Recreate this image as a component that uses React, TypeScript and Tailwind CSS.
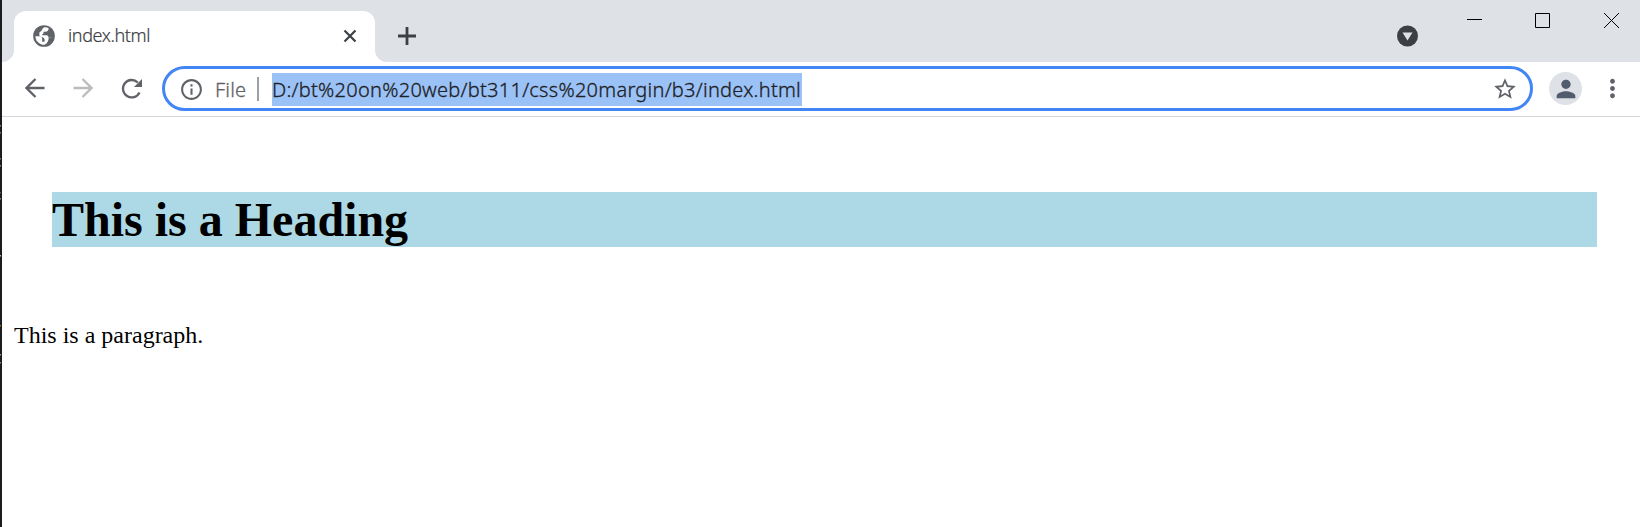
import React from 'react';

const fringe = [
  [6, '#8a8a8a'], [13, '#777'], [39, '#777'], [46, '#888'], [73, '#555'], [79, '#888'],
  [136, '#bbb'], [206, '#b06a20'], [235, '#999'], [243, '#888'],
] as const;

function Icon({ d, className }: { d: string; className: string }) {
  return (
    <svg viewBox="0 0 24 24" fill="currentColor" className={'shrink-0 ' + className}>
      <path d={d} />
    </svg>
  );
}

function Globe() {
  return (
    <svg viewBox="0 0 24 24" className="size-[26px] shrink-0">
      <circle cx="12" cy="12" r="10" fill="#5f6368" />
      <path
        fill="#fff"
        d="M12.600 4C14 3.900 15.300 4.200 16.300 4.800C16.200 6.800 15.200 7.900 13.300 8.100H11.500V9.300C11.500 10 11 10.400 10.200 10.500V11.300H14.200C15.600 11.400 16.200 12.200 16.200 13.500H19.600C19 17.200 15.800 20 12 20C11 20 10.200 19.800 9.400 19.500V17.400H11.300C12.200 17.400 12.700 17 12.700 16.200C12.600 14.300 11.400 13.100 9.400 13L7.700 11.600V9.600C7.700 8.500 8.300 7.900 9.500 7.600C10.100 5.900 11 4.600 12.600 4Z"
      />
      <path fill="#5f6368" d="M16.400 13.600H20.500L19.500 18L15 21L12.500 20.300C14.800 18.800 16.200 16.600 16.400 13.600Z" />
      <path fill="#fff" d="M4 12.300H8.500C9.800 12.600 10.300 13.600 10.300 15V17.500L10 19.700A8 8 0 0 1 7.600 18.700C5.400 17.300 4.100 15 4 12.300Z" />
    </svg>
  );
}

function TabStrip() {
  return (
    <div className="flex h-[62px] bg-[#dee1e6]">
      <div className="relative mt-[11px] ml-3 flex h-[51px] w-[361px] items-center rounded-t-xl bg-white pr-[18px] pl-[17px]">
        <svg viewBox="0 0 12 12" className="absolute bottom-0 -left-3 size-3 fill-white">
          <path d="M12 0V12H0A12 12 0 0 0 12 0Z" />
        </svg>
        <svg viewBox="0 0 12 12" className="absolute -right-3 bottom-0 size-3 fill-white">
          <path d="M0 0V12H12A12 12 0 0 1 0 0Z" />
        </svg>
        <div className="-mt-[2px]">
          <Globe />
        </div>
        <span className="-mt-[3px] ml-[11px] flex-1 font-['Noto_Sans',sans-serif] text-[18px] leading-6 font-light tracking-[-0.38px] text-[#3c4043] [-webkit-text-stroke:0.2px]">index.html</span>
        <svg viewBox="0 0 14 14" className="-mt-[2px] size-[14px] stroke-[#3c4043] stroke-[2.2]">
          <path d="M1.500 1.500L12.500 12.500M12.500 1.500L1.500 12.500" />
        </svg>
      </div>
      <svg viewBox="0 0 18 18" className="mt-[27px] ml-[23px] size-[18px] stroke-[#3c4043] stroke-[2.800]">
        <path d="M9 0V18M0 9H18" />
      </svg>
      <div className="flex-1" />
      <svg viewBox="0 0 22 22" className="mt-[25px] size-[22px]">
        <circle cx="10.500" cy="11" r="10.500" fill="#3c4043" />
        <path d="M5.500 7.500H15.500L10.500 15.500Z" fill="#dee1e6" />
      </svg>
      <svg viewBox="0 0 15 15" className="mt-[13px] ml-[48px] size-[15px] stroke-black" fill="none">
        <path d="M0 6.500H15" />
      </svg>
      <svg viewBox="0 0 15 15" className="mt-[13px] ml-[53px] size-[15px] stroke-black" fill="none">
        <path d="M.5.5H14.500V14.500H.5Z" />
      </svg>
      <svg viewBox="0 0 15 15" className="mt-[13px] mr-[21px] ml-[54px] size-[15px] stroke-black" fill="none">
        <path d="M0 0L15 15M15 0L0 15" />
      </svg>
    </div>
  );
}

function Toolbar() {
  return (
    <div className="flex h-[55px] items-start border-b border-[#d5d7da] bg-white text-[#5f6368]">
      <svg viewBox="0 0 20 20" className="mt-[16px] ml-[23px] size-5 shrink-0 fill-none stroke-[#5f6368] stroke-[2.300]">
        <path d="M19.500 10H2M10.500 1L1.500 10L10.500 19" />
      </svg>
      <svg viewBox="0 0 20 20" className="mt-[16px] ml-7 size-5 shrink-0 fill-none stroke-[#babcbe] stroke-[2.300]">
        <path d="M.5 10H18M9.500 1L18.500 10L9.500 19" />
      </svg>
      <svg viewBox="0 0 22 22" className="mt-[16px] ml-[28px] size-[22px] shrink-0">
        <path d="M18.500 14.500A8.700 8.700 0 1 1 16.800 4.500" fill="none" stroke="#5f6368" strokeWidth="2.300" />
        <path d="M21 1V9H13Z" fill="#5f6368" />
      </svg>
      <div className="mt-1 ml-[19px] flex h-[45px] w-[1371px] items-center rounded-full border-3 border-[#4285f4] pr-[12px] pl-[14px] font-['Noto_Sans',sans-serif] text-[20px]">
        <Icon
          className="mt-px size-[25px]"
          d="M11 7h2v2h-2zm0 4h2v6h-2zm1-9C6.480 2 2 6.480 2 12s4.480 10 10 10 10-4.480 10-10S17.520 2 12 2zm0 18c-4.410 0-8-3.590-8-8s3.590-8 8-8 8 3.590 8 8-3.590 8-8 8z"
        />
        <span className="mt-px ml-[11px] w-[42px] leading-[33px] font-light tracking-[0.2px] [-webkit-text-stroke:0.3px]">File</span>
        <span className="h-6 w-[2px] bg-[#9aa0a6]" />
        <span className="mt-px ml-[13px] h-[33px] w-[530px] bg-[#9bc2f7] leading-[33px] font-light tracking-[0.26px] whitespace-nowrap text-[#202124] [-webkit-text-stroke:0.3px]">
          D:/bt%20on%20web/bt311/css%20margin/b3/index.html
        </span>
        <Icon
          className="mt-px ml-auto size-[26px]"
          d="M22 9.240l-7.190-.62L12 2 9.190 8.630 2 9.240l5.460 4.730L5.820 21 12 17.270 18.180 21l-1.630-7.030L22 9.240zM12 15.400l-3.760 2.270 1-4.280-3.320-2.880 4.380-.38L12 6.100l1.710 4.040 4.380.38-3.320 2.880 1 4.280L12 15.400z"
        />
      </div>
      <div className="mt-[10px] ml-4 flex size-[33px] items-center justify-center rounded-full bg-[#dee1e6] text-[#525c6f]">
        <Icon className="size-[28px]" d="M12 12c2.210 0 4-1.790 4-4s-1.790-4-4-4-4 1.790-4 4 1.790 4 4 4zm0 2c-2.670 0-8 1.340-8 4v2h16v-2c0-2.660-5.330-4-8-4z" />
      </div>
      <Icon className="mt-[12px] ml-[16px] size-[29px]" d="M12 8c1.100 0 2-.9 2-2s-.9-2-2-2-2 .9-2 2 .9 2 2 2zm0 2c-1.100 0-2 .9-2 2s.9 2 2 2 2-.9 2-2-.9-2-2-2zm0 6c-1.100 0-2 .9-2 2s.9 2 2 2 2-.9 2-2-.9-2-2-2z" />
    </div>
  );
}

export default function App() {
  return (
    <div className="flex h-[527px] w-[1640px] overflow-hidden bg-white">
      <svg viewBox="0 0 2 527" className="h-[527px] w-[2px] shrink-0 bg-[#1b1c20]">
        {fringe.map(([y, color]) => (
          <rect key={y} x="0" y={119 + y} width="1" height="1.500" fill={color} />
        ))}
      </svg>
      <div className="flex min-w-0 flex-1 flex-col">
        <TabStrip />
        <Toolbar />
        <main className="flex flex-1 flex-col px-3 pt-[75px] font-['Liberation_Serif',serif] text-black">
          <h1 className="mr-[31px] ml-[38px] h-[55px] bg-[#add8e6] text-[48px] leading-[56px] font-bold">This is a Heading</h1>
          <p className="mt-[75px] text-[24px] leading-[27px]">This is a paragraph.</p>
        </main>
      </div>
    </div>
  );
}
